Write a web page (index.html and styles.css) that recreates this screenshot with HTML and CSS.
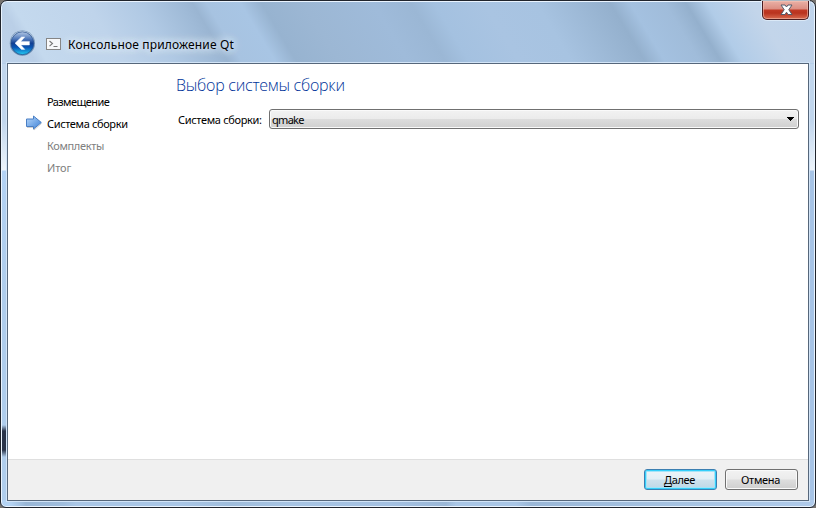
FILE: index.html
```html
<!DOCTYPE html>
<html lang="ru">
<head>
<meta charset="utf-8">
<title>Консольное приложение Qt</title>
<link rel="stylesheet" href="styles.css">
</head>
<body>
<div class="window">
  <header class="titlebar">
    <svg class="back" width="28" height="28" viewBox="0 0 28 28">
      <defs>
        <linearGradient id="ball" x2="0" y2="1">
          <stop offset="0" stop-color="#b4c8e4"/><stop offset=".3" stop-color="#537cbd"/>
          <stop offset=".5" stop-color="#123f92"/><stop offset=".68" stop-color="#0955b3"/>
          <stop offset="1" stop-color="#24cdf5"/>
        </linearGradient>
        <linearGradient id="rim" x2="0" y2="1">
          <stop offset="0" stop-color="#dce9f6"/><stop offset="1" stop-color="#6386ae"/>
        </linearGradient>
      </defs>
      <circle cx="14.4" cy="13.2" r="12.6" fill="#51759f" opacity=".75"/>
      <circle cx="14.4" cy="12.9" r="12" fill="url(#rim)"/>
      <circle cx="14.4" cy="13.2" r="11.4" fill="url(#ball)" stroke="#214b88" stroke-width=".7"/>
      <path d="M7 13.2 L13.5 6.9 H16.8 L12.9 11.4 H21.4 V15 H12.9 L16.8 19.4 H13.5 Z" fill="#fff" stroke="#e7f1ff" stroke-width=".5"/>
    </svg>
    <svg class="console" width="15" height="13" viewBox="0 0 15 13">
      <rect x=".5" y=".5" width="14" height="11" fill="#f8f9fa" stroke="#858585"/>
      <path d="M3.5 3 L6.5 5.5 L3.5 8.2 M7.5 8.5 H11.5" fill="none" stroke="#777" stroke-width="1.1"/>
    </svg>
    <h1 class="title">Консольное приложение Qt</h1>
    <button class="close" aria-label="Закрыть">
      <svg width="13" height="12" viewBox="0 0 13 12">
        <path d="M1 1 H5 L6.5 3 L8 1 H12 L8.8 5.7 L12 10.5 H8 L6.5 8.2 L5 10.5 H1 L4.2 5.7 Z" fill="#fff" stroke="#535b6b"/>
      </svg>
    </button>
  </header>
  <div class="client">
    <div class="body">
      <nav class="steps">
        <div class="step first">Размещение</div>
        <div class="step current">
          <svg class="arrow" width="18" height="16" viewBox="0 0 18 16">
            <defs><linearGradient id="arr" x2="1" y2="1"><stop offset="0" stop-color="#b9d9fb"/><stop offset="1" stop-color="#3b7fd6"/></linearGradient></defs>
            <path d="M2 12.5 H9 V15 L16.5 8.5" fill="none" stroke="#bbb" opacity=".7"/>
            <path d="M1.5 4 H8.5 V1 L16.3 7.5 L8.5 14 V11.5 H1.5 Z" fill="url(#arr)" stroke="#4a7fc4"/>
          </svg>Система сборки</div>
        <div class="step pending">Комплекты</div>
        <div class="step pending last">Итог</div>
      </nav>
      <main class="page">
        <h2 class="heading">Выбор системы сборки</h2>
        <div class="row">
          <span class="label">Система сборки:</span>
          <div class="combo"><span class="value">qmake</span>
            <svg width="9" height="5" viewBox="0 0 9 5" shape-rendering="crispEdges"><path d="M1 0H8V1H7V2H6V3H5V4H4V3H3V2H2V1H1Z"/></svg>
          </div>
        </div>
      </main>
    </div>
    <footer class="footer">
      <button class="btn primary"><u>Д</u>алее</button>
      <button class="btn">Отмена</button>
    </footer>
  </div>
</div>
</body>
</html>
```
FILE: styles.css
```css
* { box-sizing: border-box; }
body {
  margin: 0;
  background: #77736f;
  font: 11px/14px "Noto Sans", "Open Sans", sans-serif;
  color: #000;
}
.window {
  width: 816px;
  height: 508px;
  padding: 0 6px 6px;
  border: 1px solid #20242c;
  border-radius: 7px 7px 6px 6px;
  box-shadow: inset 0 0 0 1px #eaf4ff;
  background:
    linear-gradient(#0000 424px, #29344a 430px, #29344a 449px, #0000 456px) 1px 0 / 5px 100% no-repeat,
    linear-gradient(90deg, #b4d3f3 10px, #98b6d6 25px, #9fbddd 62px, #a9c6e6 75px 180px, #9fbddc 230px, #a7c4e3 290px, #a4c1e2 390px, #9ab7d7 445px, #a9c6e6 455px 515px, #9ab7d7 530px, #a7c4e3 690px, #afcaea) 0 100% / 100% 7px no-repeat,
    linear-gradient(#0000 62px, #c1d6ed 63px, #c1d6ed 120px, #edf4fb 169px, #b3d2f4 170px, #afcdec 290px, #afcdec 100%) 0 0 / 7px 100% no-repeat,
    linear-gradient(#0000 62px, #c1d6ed 63px, #c1d6ed 120px, #edf4fb 169px, #a7c4e6 170px, #a7c4e6 100%) 100% 0 / 7px 100% no-repeat,
    linear-gradient(59deg, #bdd2ea 0, #bacfe7 30px, #c4d9ee 40px, #bfd4eb 105px, #b0c9e4 150px, #9fbad7 185px, #9ab5d2 195px, #a7c3e1 207px, #a8c5e4 236px, #97b3d0 254px, #9cb7d4 290px, #9fbbda 350px, #9bb7d5 382px, #a4c1e0 402px, #a9c4e2 445px, #a7c3e1 490px, #94b0cd 553px, #a4c1e0 570px, #a0bcda 600px, #94b0cd 618px, #b1cce8 636px, #c3d5ea 675px, #bfd4ec 730px) 0 0 / 100% 62px no-repeat,
    #a9c6e6;
}
.titlebar {
  position: relative;
  display: flex;
  align-items: center;
  height: 62px;
  padding: 24px 0 0 1px;
}
.back { margin-right: 10px; flex: none; }
.console { margin-right: 7px; flex: none; }
.title {
  margin: 0;
  padding-top: 1px;
  font-size: 12px;
  line-height: 16px;
  font-weight: 400;
  letter-spacing: .16px;
  white-space: nowrap;
  text-shadow: 0 0 7px #e5effb, 0 0 9px #e5effb, 0 0 12px #dce9f6;
}
.close {
  position: absolute;
  top: 0;
  right: 0;
  display: flex;
  justify-content: center;
  width: 47px;
  height: 19px;
  padding: 3px 0 0 2px;
  border: 1px solid #4b1d21;
  border-top: 0;
  border-radius: 0 0 5px 5px;
  background: linear-gradient(#eab1a6, #dc8e82 8px, #c13a26 9px, #b9331f 12px, #d86b50);
  box-shadow: inset 0 0 0 1px #f6c6b988, 0 0 0 1px #e4f0fbbb;
}
.client {
  display: flex;
  flex-direction: column;
  height: 438px;
  border: 1px solid #56677b;
  background: #fff;
  box-shadow: 0 0 0 1px #d2e4f7;
}
.body { display: flex; flex: 1; min-height: 0; }
.steps { width: 168px; padding: 27px 0 0 39px; }
.step {
  position: relative;
  height: 22px;
  line-height: 22px;
  letter-spacing: -.36px;
  white-space: nowrap;
}
.first { letter-spacing: -.58px; }
.last { letter-spacing: -.1px; }
.pending { color: #808080; }
.arrow { position: absolute; left: -22px; top: 2px; }
.page { flex: 1; padding: 10px 9px 0 0; }
.heading {
  margin: 0;
  font: 300 16px/22px "Open Sans", "Noto Sans", sans-serif;
  letter-spacing: -.25px;
  color: #003399;
  white-space: nowrap;
}
.row { display: flex; align-items: center; margin-top: 13px; }
.label {
  flex: none;
  width: 93px;
  padding: 1px 0 0 2px;
  letter-spacing: -.33px;
  white-space: nowrap;
}
.combo {
  display: flex;
  flex: 1;
  align-items: center;
  justify-content: space-between;
  height: 20px;
  padding: 1px 3px 0 2px;
  border: 1px solid #707070;
  border-radius: 3px;
  background: linear-gradient(#f2f2f2, #ebebeb 9px, #dddddd 9px, #cfcfcf);
  box-shadow: inset 0 0 0 1px #fafafa;
}
.value { letter-spacing: -.7px; }
.footer {
  display: flex;
  justify-content: flex-end;
  gap: 8px;
  height: 41px;
  padding: 9px 10px 0 0;
  border-top: 1px solid #dfdfdf;
  background: #f0f0f0;
}
.btn {
  width: 73px;
  height: 21px;
  padding: 0 2px 0 0;
  border: 1px solid #707070;
  border-radius: 3px;
  background: linear-gradient(#f2f2f2, #ebebeb 9px, #dddddd 10px, #cfcfcf);
  box-shadow: inset 0 0 0 1px #fafafa;
  color: #000;
  font: inherit;
  letter-spacing: -.34px;
}
.btn u { text-decoration-skip-ink: none; text-underline-offset: 2px; }
.primary {
  border-color: #3c7fb1;
  background: linear-gradient(#edf4f8, #e2eff6 9px, #cee2ed 10px, #bdd7e6);
  box-shadow: inset 0 0 0 1px #35cffa, inset 0 0 0 2px #a5e4f8;
}
```
